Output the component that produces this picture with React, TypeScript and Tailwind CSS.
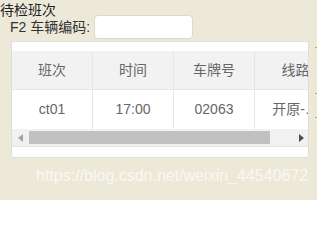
import React from "react";

const cols = [
  { title: "班次", value: "ct01" },
  { title: "时间", value: "17:00" },
  { title: "车牌号", value: "02063" },
  { title: "线路", value: "开原-…" },
];

export default function App() {
  return (
    <div
      className="relative w-[317px] h-[200px] overflow-hidden bg-[#ece9d9] text-[#222]"
      style={{ fontFamily: '"Liberation Sans", "Noto Sans CJK SC", sans-serif' }}
    >
      <div className="h-[15px] text-[14px] leading-[16px] pt-[2px]">待检班次</div>
      <div className="flex items-center h-[24px] pl-[10px] text-[14px] leading-[16px] text-[#333]">
        <span>F2 车辆编码:</span>
        <input className="ml-[4px] w-[99px] h-[24px] bg-white border border-[#d9d9d9] rounded-[4px] outline-none" />
      </div>

      <div className="ml-[11px] mt-[2px] w-[298px] bg-white border border-[#dedede] rounded-[3px] pt-[9px] pb-[10px]">
        <div className="overflow-hidden border-b border-[#e6e6e6]">
          <div className="flex w-[340px] h-[39px] bg-[#f2f2f2] border-b border-[#e6e6e6] text-[#666] text-[14px]">
            {cols.map((c, i) => (
              <div
                key={c.title}
                className={
                  "w-[81px] shrink-0 flex items-center justify-center " +
                  (i < 3 ? "border-r border-[#e6e6e6]" : "")
                }
              >
                {c.title}
              </div>
            ))}
          </div>
          <div className="flex w-[340px] h-[39px] text-[#666] text-[14px]">
            {cols.map((c, i) => (
              <div
                key={c.title}
                className={
                  "w-[81px] shrink-0 flex items-center justify-center whitespace-nowrap " +
                  (i < 3 ? "border-r border-[#e6e6e6]" : "")
                }
              >
                {c.value}
              </div>
            ))}
          </div>
          {/* horizontal scrollbar */}
          <div className="flex items-center h-[17px] bg-[#f1f1f1]">
            <div className="w-[17px] flex items-center justify-center">
              <svg width="6" height="8" viewBox="0 0 6 8">
                <path d="M5 0 L0 4 L5 8 Z" fill="#a3a3a3" />
              </svg>
            </div>
            <div className="w-[241px] h-[13px] bg-[#c1c1c1]" />
            <div className="flex-1 flex items-center justify-end pr-[4px]">
              <svg width="6" height="8" viewBox="0 0 6 8">
                <path d="M1 0 L6 4 L1 8 Z" fill="#505050" />
              </svg>
            </div>
          </div>
        </div>
      </div>

      <div className="pl-[36px] pt-[8px] text-[16px] leading-[20px] text-white/65 whitespace-nowrap">
        https://blog.csdn.net/weixin_44540672
      </div>

      <span className="absolute left-[315px] top-[47px] w-[2px] h-[1px] bg-[#d9a24a]" />
      <span className="absolute left-[315px] top-[93px] w-[2px] h-[1px] bg-[#d9a24a]" />
      <span className="absolute left-[315px] top-[117px] w-[2px] h-[1px] bg-[#d9a24a]" />
    </div>
  );
}
